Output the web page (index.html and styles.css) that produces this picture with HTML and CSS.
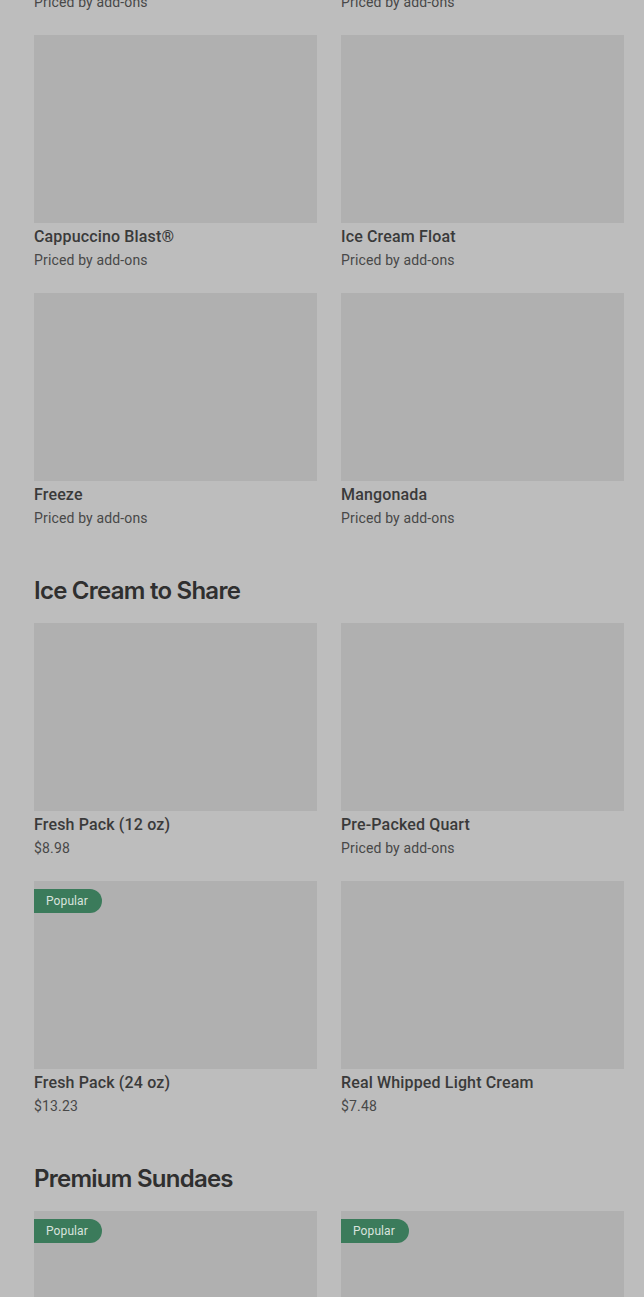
FILE: index.html
```html
<!DOCTYPE html>
<html lang="en">
<head>
<meta charset="utf-8">
<link rel="stylesheet" href="styles.css">
</head>
<body>
<main class="menu">
  <div class="grid cut-row">
    <div class="card-sub">Priced by add-ons</div>
    <div class="card-sub">Priced by add-ons</div>
  </div>
  <div class="grid">
    <div class="card"><div class="thumb"></div><div class="card-title">Cappuccino Blast®</div><div class="card-sub">Priced by add-ons</div></div>
    <div class="card"><div class="thumb"></div><div class="card-title">Ice Cream Float</div><div class="card-sub">Priced by add-ons</div></div>
    <div class="card"><div class="thumb"></div><div class="card-title">Freeze</div><div class="card-sub">Priced by add-ons</div></div>
    <div class="card"><div class="thumb"></div><div class="card-title">Mangonada</div><div class="card-sub">Priced by add-ons</div></div>
  </div>

  <section class="section">
    <h2 class="section-title">Ice Cream to Share</h2>
    <div class="grid">
      <div class="card"><div class="thumb"></div><div class="card-title">Fresh Pack (12 oz)</div><div class="card-sub">$8.98</div></div>
      <div class="card"><div class="thumb"></div><div class="card-title">Pre-Packed Quart</div><div class="card-sub">Priced by add-ons</div></div>
      <div class="card"><div class="thumb"><span class="badge">Popular</span></div><div class="card-title">Fresh Pack (24 oz)</div><div class="card-sub">$13.23</div></div>
      <div class="card"><div class="thumb"></div><div class="card-title">Real Whipped Light Cream</div><div class="card-sub">$7.48</div></div>
    </div>
  </section>

  <section class="section">
    <h2 class="section-title">Premium Sundaes</h2>
    <div class="grid">
      <div class="card"><div class="thumb"><span class="badge">Popular</span></div><div class="card-title">&nbsp;</div><div class="card-sub">&nbsp;</div></div>
      <div class="card"><div class="thumb"><span class="badge">Popular</span></div><div class="card-title">&nbsp;</div><div class="card-sub">&nbsp;</div></div>
    </div>
  </section>
</main>
</body>
</html>
```

FILE: styles.css
```css
html, body {
  margin: 0;
  padding: 0;
  background: #bdbdbd;
  overflow: hidden;
}
body {
  font-family: "Roboto", "Liberation Sans", sans-serif;
  color: #333;
}
.menu {
  padding: 0 20px 0 34px;
}
.grid {
  display: grid;
  grid-template-columns: 283px 283px;
  column-gap: 24px;
  row-gap: 22px;
}
.cut-row {
  margin-top: -9px;
  margin-bottom: 22px;
}
.card {
  display: flex;
  flex-direction: column;
}
.thumb {
  position: relative;
  height: 188px;
  background: #b0b0b0;
}
.card-title {
  margin-top: 2px;
  font-size: 16px;
  line-height: 24px;
  font-weight: 500;
  color: #3a3a3a;
  letter-spacing: 0.15px;
}
.card-sub {
  font-size: 14px;
  line-height: 22px;
  color: #484848;
  letter-spacing: 0.15px;
}
.section {
  margin-top: 46px;
}
.section-title {
  margin: 0 0 16px 0;
  font-family: "Inter", "Liberation Sans", sans-serif;
  font-size: 24px;
  line-height: 32px;
  font-weight: 600;
  color: #2f2f2f;
  letter-spacing: -0.75px;
}
.badge {
  position: absolute;
  top: 8px;
  left: 0;
  height: 24px;
  line-height: 24px;
  padding: 0 14px 0 12px;
  background: #3b7b5b;
  color: #d9e3de;
  font-size: 12px;
  letter-spacing: 0.1px;
  border-radius: 0 12px 12px 0;
}
```
